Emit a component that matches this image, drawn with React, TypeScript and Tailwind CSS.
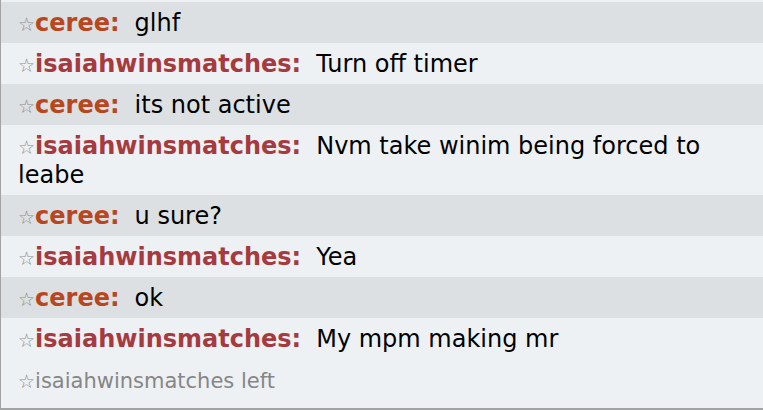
const messages: { user?: string; kind: 'a' | 'b'; text: string }[] = [
  { user: 'ceree', kind: 'a', text: 'glhf' },
  { user: 'isaiahwinsmatches', kind: 'b', text: 'Turn off timer' },
  { user: 'ceree', kind: 'a', text: 'its not active' },
  { user: 'isaiahwinsmatches', kind: 'b', text: 'Nvm take winim being forced to leabe' },
  { user: 'ceree', kind: 'a', text: 'u sure?' },
  { user: 'isaiahwinsmatches', kind: 'b', text: 'Yea' },
  { user: 'ceree', kind: 'a', text: 'ok' },
  { user: 'isaiahwinsmatches', kind: 'b', text: 'My mpm making mr' },
];

function Star() {
  return <span className="text-[19px] leading-none text-[#8a8a8a]">☆</span>;
}

export default function App() {
  return (
    <div
      className="w-[763px] h-[410px] overflow-hidden bg-[#eef1f4] border-l border-b-2 border-[#a3a3a3] text-[24px] leading-[29px] text-black"
      style={{ fontFamily: '"DejaVu Sans", Verdana, sans-serif' }}
    >
      <div className="h-[2px] bg-[#eef1f4]" />
      {messages.map((m, i) => (
        <div
          key={i}
          className={`${i % 2 === 0 ? 'bg-[#dde0e3]' : 'bg-[#eef1f4]'} pl-[17px] pr-3 pt-[7px] pb-[5px]`}
        >
          <Star />
          <b className={m.user === 'ceree' ? 'text-[#b8471f]' : 'text-[#a53a3f]'}>{m.user}:</b>
          <span className="ml-[15px]">{m.text}</span>
        </div>
      ))}
      <div className="pl-[17px] pt-[8px] text-[21px] leading-[29px] text-[#868686]">
        <Star />
        isaiahwinsmatches left
      </div>
    </div>
  );
}
